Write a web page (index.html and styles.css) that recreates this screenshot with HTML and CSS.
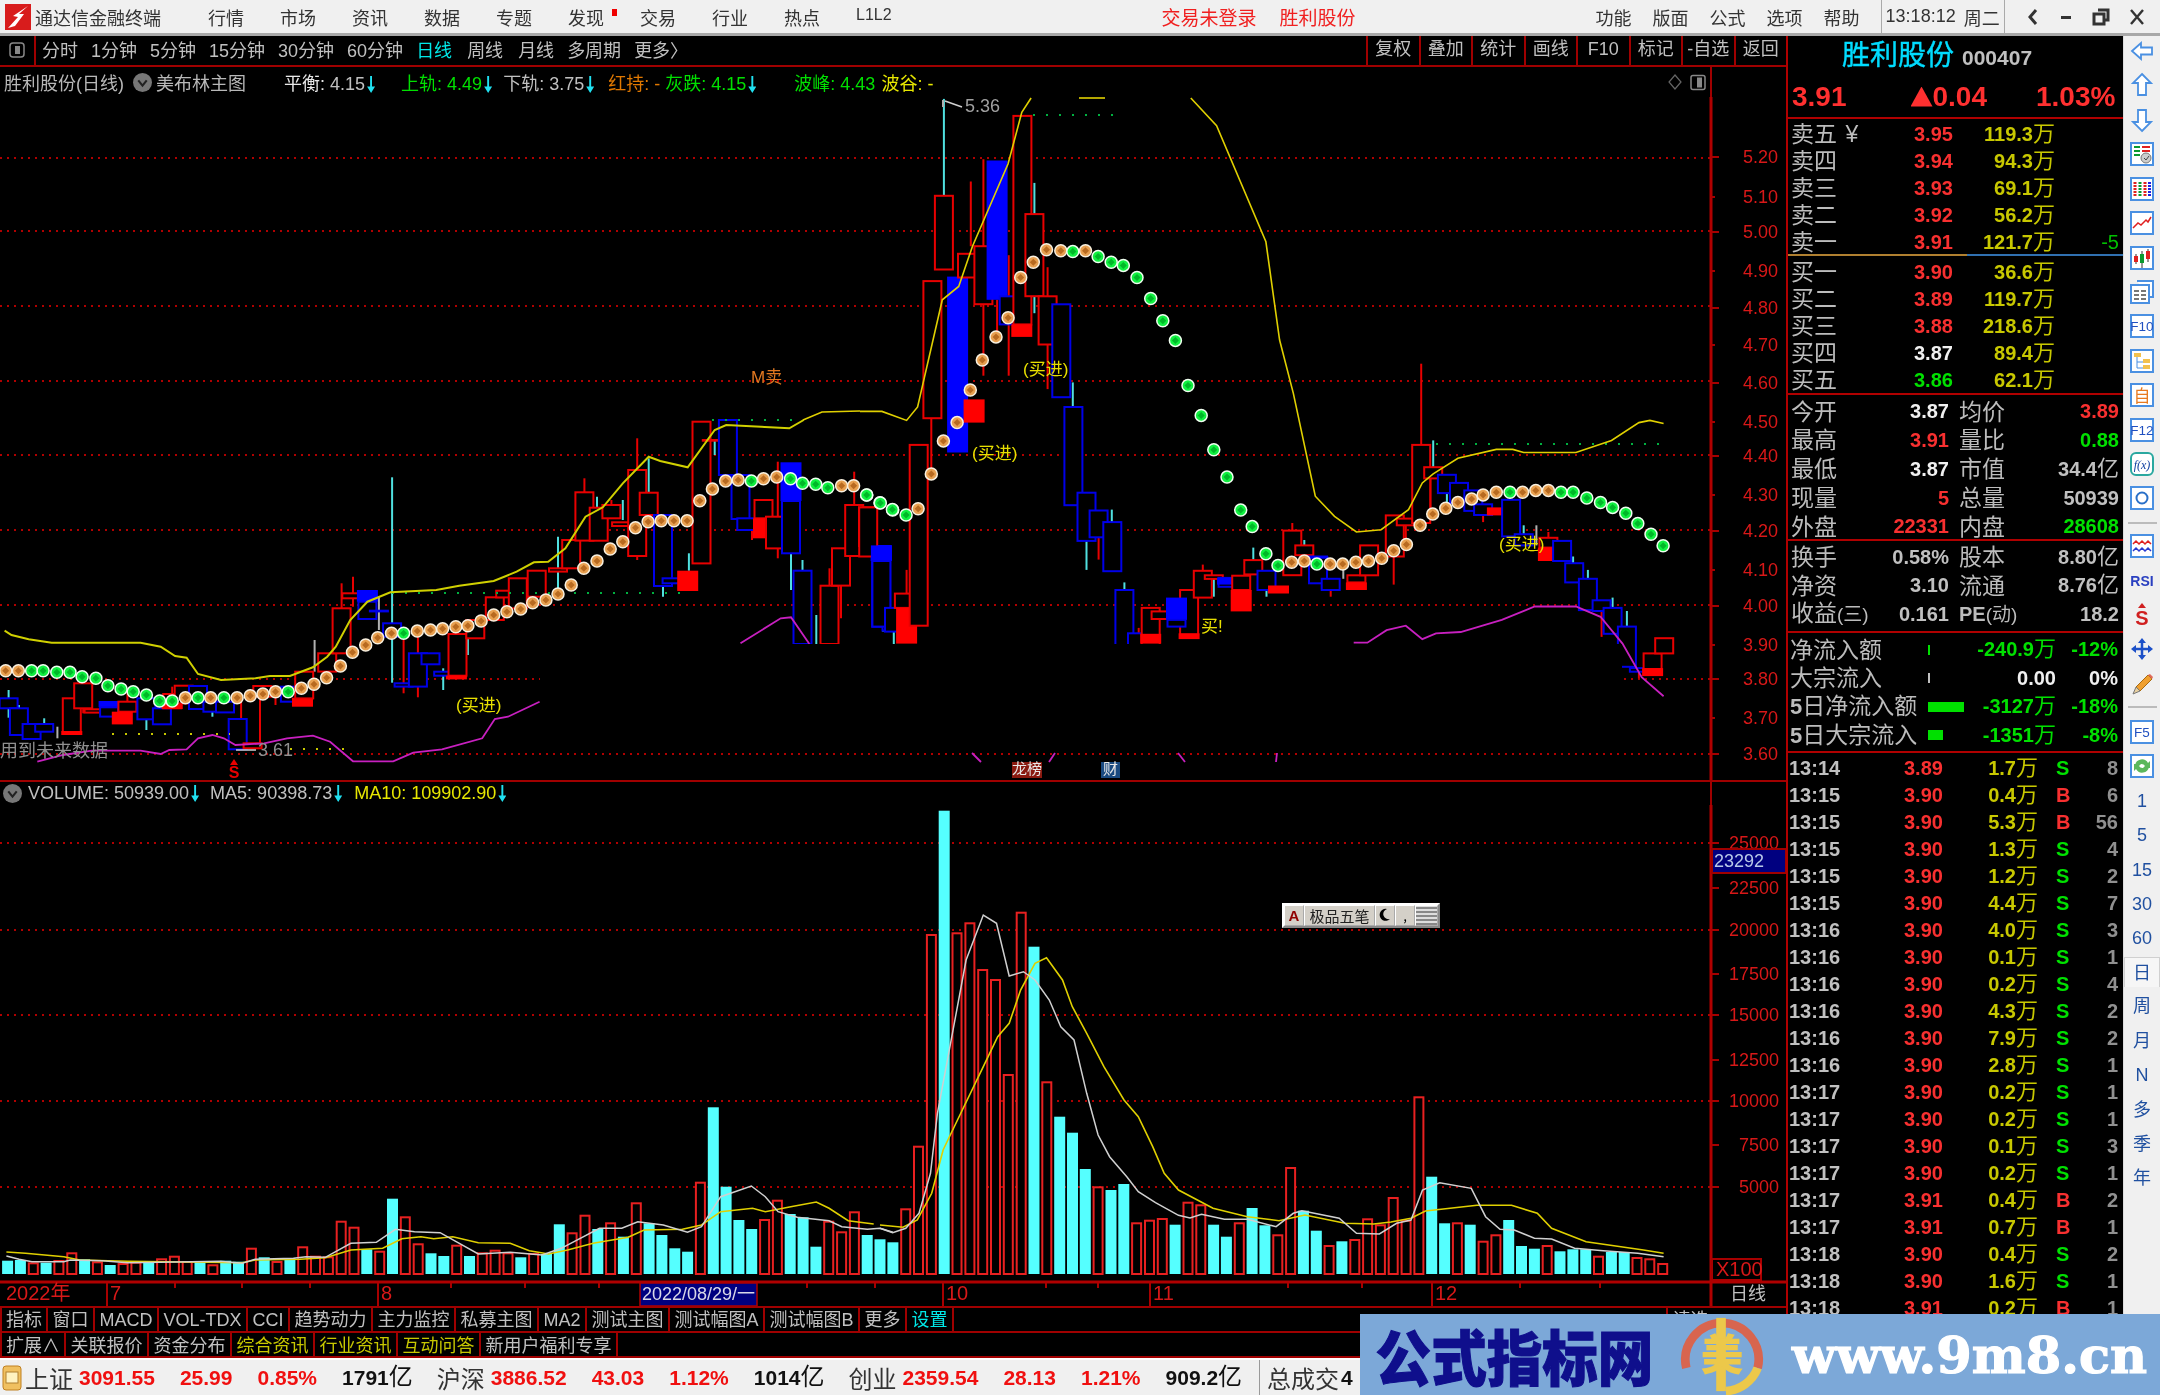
FILE: index.html
```html
<!DOCTYPE html>
<html lang="zh-CN">
<head>
<meta charset="utf-8">
<title>通达信金融终端</title>
<link rel="stylesheet" href="styles.css">
</head>
<body>
<div class="app">
  <header class="titlebar">
    <svg class="logo" viewBox="0 0 26 26"><rect width="26" height="26" fill="#d81c1c"/><path d="M23 2 L8 12 L13 13 L3 24 L10 22 L19 10 L14 10 Z" fill="#fff"/></svg>
    <span class="apptitle">通达信金融终端</span>
    <nav class="menu">
      <span>行情</span><span>市场</span><span>资讯</span><span>数据</span><span>专题</span><span class="dotted">发现</span><span>交易</span><span>行业</span><span>热点</span><span class="lvl">L1L2</span>
    </nav>
    <div class="notice"><span>交易未登录</span><span>胜利股份</span></div>
    <nav class="menu2"><span>功能</span><span>版面</span><span>公式</span><span>选项</span><span>帮助</span></nav>
    <div class="clock"><span>13:18:12</span><span>周二</span></div>
    <div class="winctl">
      <svg viewBox="0 0 14 20" width="14" height="20"><path d="M10 3 L4 10 L10 17" fill="none" stroke="#333" stroke-width="3"/></svg>
      <svg viewBox="0 0 14 20" width="14" height="20"><rect x="2" y="9" width="10" height="3" fill="#333"/></svg>
      <svg viewBox="0 0 18 20" width="18" height="20"><path d="M6 3h10v10h-3M2 7h10v10H2z" fill="none" stroke="#333" stroke-width="3"/></svg>
      <svg viewBox="0 0 16 20" width="16" height="20"><path d="M2 3 L14 17 M14 3 L2 17" fill="none" stroke="#333" stroke-width="2.4"/></svg>
    </div>
  </header>

  <div class="workspace">
    <div class="left">
      <div class="toolbar">
        <div class="tb-icon"><svg viewBox="0 0 16 16" width="16" height="18"><rect x="1" y="1" width="14" height="14" rx="3" fill="none" stroke="#888" stroke-width="1.5"/><rect x="6" y="4" width="5" height="8" fill="#888"/></svg></div>
        <div class="periods">
          <span>分时</span><span>1分钟</span><span>5分钟</span><span>15分钟</span><span>30分钟</span><span>60分钟</span><span class="cyan">日线</span><span class="w1">周线</span><span class="w1">月线</span><span>多周期</span><span>更多〉</span>
        </div>
        <div class="tb-btns"><span>复权</span><span>叠加</span><span>统计</span><span>画线</span><span>F10</span><span>标记</span><span>-自选</span><span>返回</span></div>
      </div>

      <section class="pane-main">
        <div class="chead">
          <span class="h-name">胜利股份(日线)</span>
          <svg class="chev" viewBox="0 0 18 18"><circle cx="9" cy="9" r="9" fill="#777"/><path d="M5 7 L9 12 L13 7" fill="none" stroke="#222" stroke-width="2"/></svg>
          <span class="h-name h-main">美布林主图</span>
          <span class="h-item m-a"><b class="wh">平衡:</b> 4.15<i class="ar"></i></span>
          <span class="h-item m-b"><b class="gr">上轨:</b> <b class="gr">4.49</b><i class="ar"></i></span>
          <span class="h-item m-c"><b>下轨:</b> 3.75<i class="ar"></i></span>
          <span class="h-item m-g"><b class="or">红持:</b> <b class="or">-</b></span>
          <span class="h-item m-d"><b class="gr">灰跌:</b> <b class="gr">4.15</b><i class="ar"></i></span>
          <span class="h-item m-e"><b class="gr">波峰:</b> <b class="gr">4.43</b></span>
          <span class="h-item m-f"><b class="ye">波谷:</b> <b class="ye">-</b></span>
          <span class="h-tools">
            <svg viewBox="0 0 14 18" width="14" height="18"><path d="M7 2 L13 9 L7 16 L1 9 Z" fill="none" stroke="#666" stroke-width="1.2"/></svg>
            <svg viewBox="0 0 16 16" width="16" height="17"><rect x="1" y="1" width="14" height="14" rx="2" fill="none" stroke="#888" stroke-width="1.5"/><rect x="7" y="3" width="5" height="10" fill="#888"/></svg>
          </span>
        </div>
        <svg id="mainChart" class="plot-main" viewBox="0 97 1786 683"></svg>
      </section>

      <section class="pane-vol">
        <div class="chead vhead">
          <svg class="chev vchev" viewBox="0 0 18 18"><circle cx="9" cy="9" r="9" fill="#777"/><path d="M5 7 L9 12 L13 7" fill="none" stroke="#222" stroke-width="2"/></svg>
          <span class="h-item">VOLUME: 50939.00<i class="ar"></i></span>
          <span class="h-item m-v">MA5: 90398.73<i class="ar"></i></span>
          <span class="h-item m-w"><b class="ye">MA10:</b> <b class="ye">109902.90</b><i class="ar"></i></span>
        </div>
        <svg id="volChart" class="plot-vol" viewBox="0 805 1786 501"></svg>
      </section>

      <div class="tabs">
        <span>指标</span><span>窗口</span><span>MACD</span><span>VOL-TDX</span><span>CCI</span><span>趋势动力</span><span>主力监控</span><span>私募主图</span><span>MA2</span><span>测试主图</span><span>测试幅图A</span><span>测试幅图B</span><span>更多</span><span class="cyan">设置</span>
        <span class="tab-end">请选</span>
      </div>
      <div class="tabs tabs2">
        <span>扩展∧</span><span>关联报价</span><span>资金分布</span><span class="yel">综合资讯</span><span class="yel">行业资讯</span><span class="yel">互动问答</span><span>新用户福利专享</span>
      </div>
    </div>

    <aside class="info">
      <div class="namerow"><span class="stock">胜利股份</span><span class="code">000407</span></div>
      <div class="pricerow"><span>3.91</span><span class="chg"><i class="tri"></i>0.04</span><span class="pct">1.03%</span></div>

      <div class="book asks">
        <div class="q"><span class="l">卖五 <em class="yen">¥</em></span><span class="re">3.95</span><span class="am">119.3<i>万</i></span><span></span></div>
        <div class="q"><span class="l">卖四</span><span class="re">3.94</span><span class="am">94.3<i>万</i></span><span></span></div>
        <div class="q"><span class="l">卖三</span><span class="re">3.93</span><span class="am">69.1<i>万</i></span><span></span></div>
        <div class="q"><span class="l">卖二</span><span class="re">3.92</span><span class="am">56.2<i>万</i></span><span></span></div>
        <div class="q"><span class="l">卖一</span><span class="re">3.91</span><span class="am">121.7<i>万</i></span><span class="dl">-5</span></div>
      </div>
      <div class="split"><span></span><span></span></div>
      <div class="book bids">
        <div class="q"><span class="l">买一</span><span class="re">3.90</span><span class="am">36.6<i>万</i></span><span></span></div>
        <div class="q"><span class="l">买二</span><span class="re">3.89</span><span class="am">119.7<i>万</i></span><span></span></div>
        <div class="q"><span class="l">买三</span><span class="re">3.88</span><span class="am">218.6<i>万</i></span><span></span></div>
        <div class="q"><span class="l">买四</span><span class="wt">3.87</span><span class="am">89.4<i>万</i></span><span></span></div>
        <div class="q"><span class="l">买五</span><span class="gn">3.86</span><span class="am">62.1<i>万</i></span><span></span></div>
      </div>

      <div class="stats st1">
        <div class="s"><span class="l">今开</span><span class="v wt">3.87</span><span class="l">均价</span><span class="v re">3.89</span></div>
        <div class="s"><span class="l">最高</span><span class="v re">3.91</span><span class="l">量比</span><span class="v gn">0.88</span></div>
        <div class="s"><span class="l">最低</span><span class="v wt">3.87</span><span class="l">市值</span><span class="v">34.4<i>亿</i></span></div>
        <div class="s"><span class="l">现量</span><span class="v re">5</span><span class="l">总量</span><span class="v">50939</span></div>
        <div class="s"><span class="l">外盘</span><span class="v re">22331</span><span class="l">内盘</span><span class="v gn">28608</span></div>
      </div>
      <div class="stats st2">
        <div class="s s2"><span class="l">换手</span><span class="v">0.58%</span><span class="l">股本</span><span class="v">8.80<i>亿</i></span></div>
        <div class="s s2"><span class="l">净资</span><span class="v">3.10</span><span class="l">流通</span><span class="v">8.76<i>亿</i></span></div>
        <div class="s s2"><span class="l">收益<small>(三)</small></span><span class="v">0.161</span><span class="l"><strong>PE</strong><small>(动)</small></span><span class="v">18.2</span></div>
      </div>
      <div class="stats st3">
        <div class="f"><span class="l">净流入额</span><span class="bar b-tick"></span><span class="v gn">-240.9<i>万</i></span><span class="v gn">-12%</span></div>
        <div class="f"><span class="l">大宗流入</span><span class="bar b-tick b-gray"></span><span class="v wt">0.00</span><span class="v wt">0%</span></div>
        <div class="f"><span class="l"><b>5</b>日净流入额</span><span class="bar b-big"></span><span class="v gn">-3127<i>万</i></span><span class="v gn">-18%</span></div>
        <div class="f"><span class="l"><b>5</b>日大宗流入</span><span class="bar b-mid"></span><span class="v gn">-1351<i>万</i></span><span class="v gn">-8%</span></div>
      </div>

      <div class="trades">
        <div class="t"><span>13:14</span><span class="re">3.89</span><span class="am">1.7<i>万</i></span><span class="gn">S</span><span>8</span></div>
        <div class="t"><span>13:15</span><span class="re">3.90</span><span class="am">0.4<i>万</i></span><span class="re">B</span><span>6</span></div>
        <div class="t"><span>13:15</span><span class="re">3.90</span><span class="am">5.3<i>万</i></span><span class="re">B</span><span>56</span></div>
        <div class="t"><span>13:15</span><span class="re">3.90</span><span class="am">1.3<i>万</i></span><span class="gn">S</span><span>4</span></div>
        <div class="t"><span>13:15</span><span class="re">3.90</span><span class="am">1.2<i>万</i></span><span class="gn">S</span><span>2</span></div>
        <div class="t"><span>13:15</span><span class="re">3.90</span><span class="am">4.4<i>万</i></span><span class="gn">S</span><span>7</span></div>
        <div class="t"><span>13:16</span><span class="re">3.90</span><span class="am">4.0<i>万</i></span><span class="gn">S</span><span>3</span></div>
        <div class="t"><span>13:16</span><span class="re">3.90</span><span class="am">0.1<i>万</i></span><span class="gn">S</span><span>1</span></div>
        <div class="t"><span>13:16</span><span class="re">3.90</span><span class="am">0.2<i>万</i></span><span class="gn">S</span><span>4</span></div>
        <div class="t"><span>13:16</span><span class="re">3.90</span><span class="am">4.3<i>万</i></span><span class="gn">S</span><span>2</span></div>
        <div class="t"><span>13:16</span><span class="re">3.90</span><span class="am">7.9<i>万</i></span><span class="gn">S</span><span>2</span></div>
        <div class="t"><span>13:16</span><span class="re">3.90</span><span class="am">2.8<i>万</i></span><span class="gn">S</span><span>1</span></div>
        <div class="t"><span>13:17</span><span class="re">3.90</span><span class="am">0.2<i>万</i></span><span class="gn">S</span><span>1</span></div>
        <div class="t"><span>13:17</span><span class="re">3.90</span><span class="am">0.2<i>万</i></span><span class="gn">S</span><span>1</span></div>
        <div class="t"><span>13:17</span><span class="re">3.90</span><span class="am">0.1<i>万</i></span><span class="gn">S</span><span>3</span></div>
        <div class="t"><span>13:17</span><span class="re">3.90</span><span class="am">0.2<i>万</i></span><span class="gn">S</span><span>1</span></div>
        <div class="t"><span>13:17</span><span class="re">3.91</span><span class="am">0.4<i>万</i></span><span class="re">B</span><span>2</span></div>
        <div class="t"><span>13:17</span><span class="re">3.91</span><span class="am">0.7<i>万</i></span><span class="re">B</span><span>1</span></div>
        <div class="t"><span>13:18</span><span class="re">3.90</span><span class="am">0.4<i>万</i></span><span class="gn">S</span><span>2</span></div>
        <div class="t"><span>13:18</span><span class="re">3.90</span><span class="am">1.6<i>万</i></span><span class="gn">S</span><span>1</span></div>
        <div class="t"><span>13:18</span><span class="re">3.91</span><span class="am">0.2<i>万</i></span><span class="re">B</span><span>1</span></div>
      </div>
    </aside>

    <aside class="side">
      <svg class="ic" viewBox="0 0 24 24"><path d="M2 12 L11 4 V8.500 H22 V15.500 H11 V20 Z" fill="#fff" stroke="#4a90e2" stroke-width="1.800"/></svg>
      <svg class="ic" viewBox="0 0 24 24"><path d="M12 1 L21 10 H16 V22 H8 V10 H3 Z" fill="#fff" stroke="#4a90e2" stroke-width="1.800"/></svg>
      <svg class="ic" viewBox="0 0 24 24"><path d="M12 23 L21 14 H16 V2 H8 V14 H3 Z" fill="#fff" stroke="#4a90e2" stroke-width="1.800"/></svg>
      <svg class="ic" viewBox="0 0 24 24"><rect x="1" y="1" width="22" height="22" fill="#fff" stroke="#4a90e2" stroke-width="2"/><path d="M4 5h6M4 9h6M4 13h6" stroke="#0a9a30" stroke-width="2"/><path d="M12 5h8M12 9h8" stroke="#e02020" stroke-width="2"/><circle cx="16" cy="16" r="5" fill="#ccc" stroke="#777"/><path d="M14 16l2 2 3-4" fill="none" stroke="#444"/></svg>
      <svg class="ic" viewBox="0 0 24 24"><rect x="1" y="1" width="22" height="22" fill="#fff" stroke="#4a90e2" stroke-width="2"/><path d="M5 5v14" stroke="#e02020" stroke-width="3" stroke-dasharray="2 1"/><path d="M10 5v14" stroke="#0a9a30" stroke-width="3" stroke-dasharray="2 1"/><path d="M15 5v14" stroke="#e02020" stroke-width="3" stroke-dasharray="2 1"/><path d="M19.500 5v14" stroke="#2020e0" stroke-width="3" stroke-dasharray="2 1"/></svg>
      <svg class="ic" viewBox="0 0 24 24"><rect x="1" y="1" width="22" height="22" fill="#fff" stroke="#4a90e2" stroke-width="2"/><path d="M3 17 L8 12 L11 14 L16 9 L18 11 L21 6" fill="none" stroke="#e02020" stroke-width="1.500"/></svg>
      <svg class="ic" viewBox="0 0 24 24"><rect x="1" y="1" width="22" height="22" fill="#fff" stroke="#4a90e2" stroke-width="2"/><path d="M6 8v10M12 5v17M18 3v13" stroke="#333" stroke-width="1"/><rect x="4" y="10" width="4" height="6" fill="#e02020"/><rect x="10" y="8" width="4" height="9" fill="#0a9a30"/><rect x="16" y="5" width="4" height="8" fill="#e02020"/></svg>
      <svg class="ic" viewBox="0 0 24 24"><path d="M7 1h16v16h-4" fill="#fff" stroke="#4a90e2" stroke-width="2"/><rect x="1" y="5" width="18" height="18" fill="#fff" stroke="#4a90e2" stroke-width="2"/><path d="M4 11h5M11 11h5M4 15h5M11 15h5M4 19h5M11 19h5" stroke="#777" stroke-width="2"/></svg>
      <svg class="ic" viewBox="0 0 24 24"><rect x="1" y="1" width="22" height="22" fill="#fff" stroke="#4a90e2" stroke-width="2"/><text class="ic-t" x="12" y="17">F10</text></svg>
      <svg class="ic" viewBox="0 0 24 24"><rect x="1" y="1" width="22" height="22" fill="#fff" stroke="#4a90e2" stroke-width="2"/><path d="M7 8v11h6M7 13h6" fill="none" stroke="#4a90e2"/><rect x="4" y="4" width="7" height="4" fill="#f2c14e"/><rect x="13" y="10" width="7" height="4" fill="#f2c14e"/><rect x="13" y="16" width="7" height="4" fill="#f2c14e"/></svg>
      <svg class="ic" viewBox="0 0 24 24"><rect x="1" y="1" width="22" height="22" fill="#fff" stroke="#4a90e2" stroke-width="2"/><text class="ic-o" x="12" y="18.500">自</text></svg>
      <svg class="ic" viewBox="0 0 24 24"><rect x="1" y="1" width="22" height="22" fill="#fff" stroke="#4a90e2" stroke-width="2"/><text class="ic-t" x="12" y="17">F12</text></svg>
      <svg class="ic" viewBox="0 0 24 24"><rect x="1" y="1" width="22" height="22" rx="5" fill="#fff" stroke="#2aa8a0" stroke-width="2"/><text class="ic-f" x="12" y="17">f(x)</text></svg>
      <svg class="ic" viewBox="0 0 24 24"><rect x="1" y="1" width="22" height="22" fill="#fff" stroke="#4a90e2" stroke-width="2"/><circle cx="12" cy="12" r="5.500" fill="none" stroke="#2a70c8" stroke-width="2"/></svg>
      <i class="side-sep s-a"></i>
      <svg class="ic ic-b" viewBox="0 0 24 24"><rect x="1" y="1" width="22" height="22" fill="#fff" stroke="#4a90e2" stroke-width="2"/><path d="M3 10l3-3 3 3 3-3 3 3 3-3 3 3" fill="none" stroke="#e02020" stroke-width="1.500"/><path d="M3 17l3-3 3 3 3-3 3 3 3-3 3 3" fill="none" stroke="#2a3ad0" stroke-width="1.500"/></svg>
      <svg class="ic" viewBox="0 0 24 24"><text class="ic-r" x="12" y="18">RSI</text></svg>
      <svg class="ic" viewBox="0 0 24 24"><path d="M12 0l4 5H8z" fill="#d02020"/><text class="ic-s" x="12" y="22">S</text></svg>
      <svg class="ic" viewBox="0 0 24 24"><path d="M12 1l4 5h-8zM12 23l4-5h-8zM1 12l5-4v8zM23 12l-5-4v8z" fill="#1c50c8"/><path d="M12 5v14M5 12h14" stroke="#1c50c8" stroke-width="2.500"/></svg>
      <svg class="ic" viewBox="0 0 24 24"><path d="M6 15 L18 3 L22 7 L10 19 Z" fill="#f0a030" stroke="#a86a10"/><path d="M18 3l4 4 1-2-3-3z" fill="#e06a5a"/><path d="M6 15l4 4-7 3z" fill="#e8d0a0" stroke="#777"/></svg>
      <i class="side-sep s-b"></i>
      <svg class="ic ic-c" viewBox="0 0 24 24"><rect x="1" y="1" width="22" height="22" fill="#fff" stroke="#4a90e2" stroke-width="2"/><text class="ic-t" x="12" y="17">F5</text></svg>
      <svg class="ic" viewBox="0 0 24 24"><rect x="1" y="1" width="22" height="22" fill="#fff" stroke="#4a90e2" stroke-width="2"/><path d="M5 11a7 7 0 0 1 13-2l2-2v7h-7l2-2a4 4 0 0 0-7 0zM19 13a7 7 0 0 1-13 2l-2 2v-7h7l-2 2a4 4 0 0 0 7 0z" fill="#5cb85c"/></svg>
      <span class="per">1</span><span class="per">5</span><span class="per">15</span><span class="per">30</span><span class="per">60</span><span class="per per-on">日</span><span class="per">周</span><span class="per">月</span><span class="per">N</span><span class="per">多</span><span class="per">季</span><span class="per">年</span>
    </aside>
  </div>

  <footer class="status">
    <svg class="st-ic" viewBox="0 0 20 26"><rect x="1" y="1" width="18" height="24" rx="3" fill="#f0c060" stroke="#c08020"/><rect x="4" y="7" width="12" height="11" fill="#fff2c0" stroke="#b08030"/></svg>
    <span class="st-l">上证</span><span class="st-n n1">3091.55</span><span class="st-n">25.99</span><span class="st-n">0.85%</span><span class="st-b">1791<i>亿</i></span>
    <span class="st-l g1">沪深</span><span class="st-n n1">3886.52</span><span class="st-n">43.03</span><span class="st-n">1.12%</span><span class="st-b">1014<i>亿</i></span>
    <span class="st-l g1">创业</span><span class="st-n n1">2359.54</span><span class="st-n">28.13</span><span class="st-n">1.21%</span><span class="st-b">909.2<i>亿</i></span>
    <span class="st-l st-total">总成交</span><span class="st-b g2">4</span>
  </footer>

  <div class="ime">
    <span class="ime-a">A</span><span class="ime-n">极品五笔</span>
    <span class="ime-m"><svg viewBox="0 0 12 14" width="12" height="14"><path d="M8 1 A6 6 0 1 0 11 11 A5 5 0 0 1 8 1 Z" fill="#000"/></svg></span>
    <span class="ime-m">,</span><span class="ime-k"></span>
  </div>

  <aside class="watermark">
    <span class="wm-cn">公式指标网</span>
    <svg class="wm-logo" viewBox="0 0 84 84">
      <path d="M5 56 A38 38 0 1 1 79 56" fill="none" stroke="#d8654f" stroke-width="9"/>
      <path d="M46 80 A38 38 0 0 0 79 56" fill="none" stroke="#ecc84a" stroke-width="9"/>
      <rect x="36" y="4" width="10" height="76" fill="#ecc84a"/>
      <text class="wm-mid" x="42" y="58">美</text>
    </svg>
    <span class="wm-en">www.9m8.cn</span>
  </aside>
</div>
<script src="app.js"></script>
</body>
</html>
```

FILE: styles.css
```css
*{box-sizing:border-box}
html,body{margin:0;padding:0;background:#000}
body{font-family:"Liberation Sans","Noto Sans CJK SC",sans-serif;color:#c0c0c0}
i,em{font-style:normal}
b{font-weight:400}
.app{position:relative;width:2160px;height:1395px;overflow:hidden;display:flex;flex-direction:column;background:#000;filter:blur(.35px)}

/* title bar */
.titlebar{flex:none;height:36px;background:#f0f0f0;border-bottom:3px solid #a8a8a8;display:flex;align-items:center;color:#333;font-size:18px}
.logo{width:26px;height:26px;margin-left:5px;flex:none}
.apptitle{margin-left:4px;width:126px;white-space:nowrap}
.menu{display:flex;gap:36px;margin-left:47px}
.menu span{white-space:nowrap}
.dotted{position:relative}
.dotted::after{content:"";position:absolute;left:44px;top:5px;width:5px;height:7px;background:#f00000}
.menu .lvl{font-size:16px;line-height:22px}
.notice{display:flex;gap:23px;margin-left:270px;color:#f02020;font-size:19px;width:196px}
.menu2{display:flex;gap:21px;margin-left:238px}
.clock{display:flex;gap:8px;align-items:center;margin-left:21px;height:33px;padding:0 4px;border-left:1px solid #aaa;border-right:1px solid #aaa;width:124px;font-size:18px;white-space:nowrap}
.winctl{display:flex;align-items:center;gap:19px;margin-left:21px}

/* frame */
.workspace{flex:none;height:1322px;display:flex}
.left{flex:none;width:1786px;display:flex;flex-direction:column}
.toolbar{flex:none;height:31px;display:flex;align-items:center;border-bottom:2px solid #a00000;font-size:18px}
.tb-icon{flex:none;width:36px;height:29px;border-right:2px solid #a00000;padding:5px 0 0 9px}
.periods{display:flex;gap:13px;margin-left:6px;white-space:nowrap;line-height:26px}
.cyan{color:#00e8e8}
.w1{margin-left:2px}
.tb-btns{margin-left:auto;display:grid;grid-template-columns:repeat(8,52.500px);height:29px;line-height:27px;text-align:center}
.tb-btns span{border-left:2px solid #a00000;white-space:nowrap}

.chead{height:30px;width:1712px;border-right:2px solid #a00000;display:flex;align-items:center;font-size:18px;white-space:nowrap;color:#c0c0c0;padding-left:4px}
.h-name{color:#b8b8b8}
.chev{width:19px;height:19px;margin-left:9px;margin-right:4px;flex:none}
.h-main{margin-right:38px}
.h-item b{color:inherit}
.h-item .wh{color:#e8e8e8}
.h-item .gr{color:#00e000}
.h-item .or{color:#e07800}
.h-item .ye{color:#e8e800}
.m-a{margin-left:0}
.m-b{margin-left:26px}
.m-c{margin-left:11px}
.m-g{margin-left:14px}
.m-d{margin-left:5px}
.m-e{margin-left:38px}
.m-f{margin-left:6px}
.m-v{margin-left:11px}
.m-w{margin-left:12px}
.h-tools{margin-left:auto;display:flex;gap:8px;align-items:center;padding-right:4px}
.ar{display:inline-block;width:8px;height:17px;margin-left:2px;vertical-align:-3px;background:#20e0f0;clip-path:polygon(38% 0,62% 0,62% 62%,100% 62%,50% 100%,0 62%,38% 62%)}

.pane-main{flex:none;height:715px;border-bottom:2px solid #a00000;display:flex;flex-direction:column}
.plot-main{display:block;width:1786px;height:683px;overflow:visible}
.pane-vol{flex:none;height:524px;display:flex;flex-direction:column}
.vhead{height:23px;padding-left:3px}
.vchev{margin-left:0;margin-right:6px}
.plot-vol{display:block;width:1786px;height:501px;overflow:visible}

.tabs{flex:none;height:25px;border-top:2px solid #a00000;display:flex;align-items:center;font-size:18px;white-space:nowrap}
.tabs2{height:27px;border-bottom:2px solid #a00000}
.tabs span{height:100%;line-height:24px;padding:0 4.500px;border-right:2px solid #a00000}
.tabs span:first-child{padding:0 4px;border-left:2px solid #a00000}
.tabs2 span{line-height:26px}
.yel{color:#c8c800}
.tabs .tab-end{margin-left:auto;width:44px;border-left:2px solid #a00000;border-right:0;margin-right:76px}

/* info panel */
.info{flex:none;width:337px;border-left:2px solid #b00000;font-size:20px;font-weight:700;color:#c0c0c0;overflow:hidden;background:#000}
.info i{font-size:22px;font-weight:400;line-height:0}
.namerow{height:40px;display:flex;align-items:center;padding-left:54px}
.stock{font-size:28px;font-weight:400;color:#00dcff;line-height:38px;-webkit-text-stroke:.4px #00dcff}
.code{font-size:21px;margin-left:8px;margin-top:3px}
.pricerow{height:43px;border-bottom:2px solid #b00000;display:flex;align-items:center;padding-left:4px;color:#ff3030;font-size:28px}
.chg{margin-left:64px;display:flex;align-items:center}
.tri{width:22px;height:20px;background:#ff3030;clip-path:polygon(50% 0,100% 100%,0 100%)}
.pct{margin-left:49px}
.book{display:flex;flex-direction:column}
.q{height:27px;display:grid;grid-template-columns:123px 50px 91px 1fr;align-items:center;padding:3px 0 0 3px;color:#c8c800}
.l{color:#bcbcbc;font-size:23px;font-weight:400;white-space:nowrap;line-height:24px}
.l small{font-size:19px}
.l strong{font-size:20px;font-weight:700}
.yen{margin-left:2px}
.re{color:#f83030}
.wt{color:#f0f0f0}
.gn{color:#00e000}
.am{text-align:right;color:#c8c800;white-space:nowrap}
.dl{text-align:right;padding-right:4px;color:#00c000;font-weight:400}
.split{height:2px;display:flex}
.split span:first-child{width:179px;background:#b08030}
.split span:last-child{flex:1;background:#3070b0}
.bids{padding-top:1px;height:139px;border-bottom:2px solid #b00000}
.stats{border-bottom:2px solid #b00000}
.st1{height:146px;padding-top:1.500px}
.st2{height:92px;padding-top:1px}
.st3{height:120px;padding-top:1px}
.s{height:28.800px;display:grid;grid-template-columns:78px 80px 80px 90px;align-items:center;padding:1.500px 0 0 3px}
.s2{height:28.500px}
.s .l:nth-child(3){margin-left:10px}
.v{text-align:right;white-space:nowrap}
.f{height:28.500px;display:grid;grid-template-columns:138px 45px 83px 62px;align-items:center;padding:3px 0 0 2px}
.f b{font-weight:700;font-size:22px}
.bar{display:block;background:#00e000;height:10px}
.b-tick{width:2px}
.b-gray{background:#c0c0c0}
.b-big{width:36px}
.b-mid{width:15px}
.trades{display:flex;flex-direction:column}
.t{flex:none;height:27px;display:grid;grid-template-columns:115px 50px 84px 40px 40px;align-items:center;padding:3px 0 0 1px}
.t span:nth-child(4){padding-left:18px}
.t span:nth-child(5){text-align:right;color:#909090}
.t span:first-child{white-space:nowrap}

/* side toolbar */
.side{flex:none;width:37px;background:#f0f0f0;border-left:1px solid #ddd;display:flex;flex-direction:column;align-items:center;gap:4.430px}
.ic{flex:none;width:24px;height:30px}
.ic-b{margin-top:2.600px}
.ic-c{margin-top:4.500px}
.ic-t{font-size:13.500px;fill:#2050c0;text-anchor:middle;font-family:"Liberation Sans",sans-serif}
.ic-o{font-size:17px;fill:#e87a20;text-anchor:middle;font-family:"Noto Sans CJK SC",sans-serif}
.ic-f{font-size:12px;font-style:italic;fill:#1040a0;text-anchor:middle;font-family:"Liberation Serif",serif}
.ic-r{font-size:14px;font-weight:700;fill:#2a40c0;text-anchor:middle;font-family:"Liberation Sans",sans-serif}
.ic-s{font-size:20px;font-weight:700;fill:#d02020;text-anchor:middle;font-family:"Liberation Sans",sans-serif}
.side-sep{flex:none;width:29px;height:2px;background:#bbb}
.s-a{margin-top:4px}
.s-b{margin-top:3px}
.per{flex:none;height:30px;line-height:30px;font-size:18px;color:#2050a0;text-align:center;width:100%}
.per-on{background:#f6f6f6;border:1px solid #d0d0d0;border-bottom:0;margin-top:-1px}

/* status */
.status{flex:none;height:37px;background:#f0f0f0;border-top:2px solid #fff;display:flex;align-items:center;color:#222;font-size:21px;white-space:nowrap;padding-left:2px}
.st-ic{width:20px;height:26px;flex:none}
.st-l{font-size:24px;color:#333;margin-left:3px;width:50px}
.st-n{color:#f01010;font-weight:700;margin-left:25px}
.st-n.n1{margin-left:4px}
.st-b{color:#111;font-weight:700;margin-left:25px}
.st-b i{font-weight:400;font-size:24px;line-height:0}
.st-l.g1{margin-left:24px}
.st-total{margin-left:17px;padding-left:7px;border-left:1px solid #999;width:82px}
.st-b.g2{margin-left:0}

/* floating */
.ime{position:absolute;left:1282px;top:903px;width:158px;height:25px;background:#d4d0c8;border:2px solid #fff;border-right-color:#888;border-bottom-color:#888;display:flex;align-items:center;color:#222;font-size:15px;font-family:"Noto Sans CJK SC",sans-serif}
.ime span{height:21px;line-height:20px;border:1px solid #aaa;border-top-color:#fff;border-left-color:#fff;text-align:center;display:block}
.ime-a{width:20px;color:#900000;font-weight:700;font-family:"Liberation Sans",sans-serif}
.ime-n{width:71px;white-space:nowrap}
.ime-m{width:20px;font-size:13px;color:#000}
.ime-m svg{display:block;margin:2px auto 0}
.ime-k{flex:1;background:repeating-linear-gradient(0deg,#888 0 2px,#ddd 2px 4px)}

.watermark{position:absolute;left:1360px;top:1314px;width:800px;height:81px;background:#7ca8d8;display:flex;align-items:center}
.wm-cn{font-family:"Noto Sans CJK SC",sans-serif;font-weight:900;font-size:55px;color:#0f0f8c;margin-left:17px;width:277px;white-space:nowrap;line-height:60px;-webkit-text-stroke:1px #0f0f8c;transform:scale(1.01,1.1)}
.wm-logo{width:84px;height:81px;margin-left:26px;flex:none}
.wm-mid{font-family:"Noto Sans CJK SC",sans-serif;font-weight:900;font-size:44px;fill:#ecc84a;text-anchor:middle}
.wm-en{font-family:"DejaVu Serif",serif;font-weight:700;font-size:51px;color:#fff;margin-left:28px;white-space:nowrap;-webkit-text-stroke:1.200px #fff}

/* chart strokes */
svg text{font-family:"Liberation Sans","Noto Sans CJK SC",sans-serif}
.grid{stroke:#b00000;stroke-width:2;stroke-dasharray:2 5}
.axis{stroke:#a80000;stroke-width:2;fill:none}
.axis3{stroke:#b00000;stroke-width:3;fill:none}
.ax{fill:#d81818;font-size:18px;text-anchor:end;dominant-baseline:middle}
.d-r{fill:#000;stroke:#e80000;stroke-width:2}
.d-b{fill:#000;stroke:#0000e8;stroke-width:2}
.d-R{fill:#ff0000}
.d-B{fill:#0000ff}
.w-r{stroke:#e80000;stroke-width:2}
.w-c{stroke:#50e0e0;stroke-width:2}
.w-w{stroke:#b0b0b0;stroke-width:2}
.ln-y{fill:none;stroke:#e0d000;stroke-width:1.600}
.ln-yb{fill:none;stroke:#d0d000;stroke-width:2}
.ln-w{fill:none;stroke:#d0d0d0;stroke-width:1.500}
.ln-m{fill:none;stroke:#c820c0;stroke-width:1.800}
.dot-o{fill:#e8a050;stroke:#f8f0e0;stroke-width:1.500}
.dot-g{fill:#10f040;stroke:#f0fff0;stroke-width:1.500}
.dia-o{fill:#b86a20}
.dia-g{fill:#00b828}
.pt-g{fill:none;stroke:#00b040;stroke-width:2;stroke-dasharray:2 11}
.pt-y{fill:none;stroke:#c8c800;stroke-width:2;stroke-dasharray:2 11}
.mask{fill:#000}
.lab-y{fill:#e8e000;font-size:17px;dominant-baseline:middle}
.lab-o{fill:#e07820;font-size:17px;dominant-baseline:middle}
.lab-g{fill:#a0a0a0;font-size:18px;dominant-baseline:middle}
.lab-gd{fill:#909090;font-size:18px;dominant-baseline:middle}
.lab-s{fill:#e80000;font-size:16px;font-weight:700;text-anchor:middle}
.tri-s{fill:#e80000}
.b-long{fill:#8a1a10}
.b-cai{fill:#1a4a80}
.lab-b{fill:#e8e8e8;font-size:15px;dominant-baseline:middle;text-anchor:middle}
.v-r{fill:#000;stroke:#e82020;stroke-width:2}
.v-c{fill:#55ffff}
.date{fill:#d81818;font-size:20px;dominant-baseline:middle}
.datebox{fill:#000080;stroke:#b00000;stroke-width:1.500}
.datetxt{fill:#d8d8e8;font-size:18px;dominant-baseline:middle}
.daytxt{fill:#c0c0c0;font-size:18px;dominant-baseline:middle}
.hl{fill:#000080;stroke:#a00000;stroke-width:2}
.hltxt{fill:#b8c8e8;font-size:18px;dominant-baseline:middle}
```

FILE: app.js
```js
const z7=(x,y)=>[x/1.742,420+y/3];
const z8=(x,y)=>[860+x/1.823,90+y/2.24];
const z9=(x,y)=>[x/1.568,1000+y/3];
const z10=(x,y)=>[880+x/1.742,780+y/3];
const id=(x,y)=>[x,y];
const fx=n=>Math.round(n*10)/10;
const line=(x1,y1,x2,y2,c)=>`<line class="${c}" x1="${fx(x1)}" y1="${fx(y1)}" x2="${fx(x2)}" y2="${fx(y2)}"/>`;
const rect=(x,y,w,h,c)=>`<rect class="${c}" x="${fx(x)}" y="${fx(y)}" width="${fx(w)}" height="${fx(h)}"/>`;
const text=(x,y,t,c)=>`<text class="${c}" x="${x}" y="${y}">${t}</text>`;
const poly=(pts,z,c)=>`<polyline class="${c}" points="${pts.map(p=>z(p[0],p[1]).map(fx).join(',')).join(' ')}"/>`;

/* ---------- price pane ---------- */
const wicks7=[[15,810,893,'c'],[33,855,945,'c'],[77,895,912,'c'],[100,920,955,'w'],[145,865,880,'r'],[222,820,845,'r'],[255,835,930,'c'],[300,800,865,'r'],[370,875,890,'c'],[420,840,897,'r'],[453,800,985,'r'],[480,825,855,'r'],[548,660,755,'w'],[595,490,565,'r'],[615,470,560,'r'],[660,530,630,'w'],[683,172,788,'c'],[703,660,820,'r'],[728,650,832,'r'],[772,745,810,'c'],[815,655,705,'c'],[890,490,545,'r'],[972,350,535,'c'],[1018,175,217,'r'],[1040,230,325,'c'],[1065,240,255,'r'],[1085,240,300,'c'],[1110,55,420,'r'],[1130,115,218,'c'],[1155,490,530,'c'],[1200,400,452,'c'],[1245,60,105,'c'],[1290,295,330,'c'],[1310,300,360,'r'],[1355,125,415,'r'],[1378,400,510,'c'],[1398,420,452,'c'],[1422,585,672,'c'],[1445,445,497,'r'],[1465,497,595,'r'],[1488,155,255,'r'],[1557,632,672,'c']];
const bodies7=[['b',15,835,865],['b',33,865,945],['b',55,912,957],['b',77,912,935],['r',125,835,940],['R',125,933,945],['r',145,790,865],['r',163,868,878],['B',190,843,862],['b',190,862,890],['r',222,845,875],['R',213,875,913],['b',255,835,898],['b',282,865,913],['r',300,822,865],['R',300,845,867],['r',320,797,850],['b',345,798,867],['b',370,845,875],['b',392,845,877],['b',414,897,988],['r',440,970,985],['r',457,798,830],['b',505,800,845],['R',527,833,860],['r',530,755,835],['r',570,700,755],['r',595,565,700],['r',612,520,535],['B',640,510,545],['b',640,545,597],['b',660,572,574],['b',683,610,650],['b',703,790,800],['b',728,700,800],['b',750,700,733],['b',772,755,767],['r',797,642,767],['R',795,767,778],['r',828,600,655],['r',862,532,600],['r',880,512,532],['r',902,475,565],['r',935,452,530],['r',972,445,455],['r',995,360,445],['r',1018,217,362],['r',1043,263,362],['r',1065,255,295],['r',1082,307,318],['r',1110,150,408],['r',1130,218,285],['b',1155,285,498],['b',1170,475,490],['R',1198,452,513],['r',1222,5,430],['r',1240,60,62],['b',1268,0,165],['b',1290,165,297],['b',1300,295,330],['r',1330,240,295],['R',1330,295,355],['r',1350,290,385],['B',1378,127,243],['b',1378,243,400],['b',1398,452,672],['r',1445,497,672],['r',1465,385,497],['r',1488,255,408],['r',1512,262,378],['B',1535,375,423],['b',1535,423,620],['b',1553,565,632]];
const wicks8=[[85,1075,1128,'r'],[42,1202,1213,'c'],[130,735,860,'r'],[153,20,237,'c'],[202,205,350,'r'],[225,155,640,'r'],[250,470,550,'r'],[271,370,640,'r'],[318,208,500,'c'],[342,397,670,'r'],[388,655,765,'c'],[413,1010,1075,'c'],[435,1002,1052,'r'],[459,940,968,'c'],[482,1103,1120,'c'],[508,1205,1217,'r'],[625,1063,1077,'r'],[645,1095,1135,'c'],[717,1025,1053,'c'],[741,1120,1135,'c'],[788,970,987,'r'],[810,1008,1020,'c'],[858,1120,1135,'r'],[881,1070,1095,'w'],[928,1020,1045,'r'],[973,1045,1108,'r'],[995,975,1015,'r'],[1023,613,795,'r'],[1045,785,845,'c'],[1040,870,940,'r'],[1070,903,925,'c'],[1136,952,968,'r'],[1210,975,995,'c'],[1233,975,1020,'w'],[1255,990,1003,'r'],[1300,1045,1060,'c'],[1327,1075,1095,'c'],[1352,1167,1225,'r'],[1372,1137,1160,'c'],[1398,1167,1202,'c'],[1420,1297,1318,'r']];
const bodies8=[['r',15,935,1045],['B',39,1020,1055],['b',39,1055,1202],['b',62,1160,1213],['r',80,1128,1160],['R',85,1160,1240],['r',107,795,1200],['r',132,428,735],['r',153,237,402],['B',178,418,812],['r',195,367,420],['R',208,693,745],['r',225,350,480],['B',250,158,470],['b',271,462,525],['r',296,58,525],['R',295,525,553],['r',318,278,462],['r',342,462,570],['b',367,480,688],['b',389,710,930],['b',413,902,1010],['b',435,942,1002],['b',460,968,1078],['b',482,1120,1245],['b',505,1217,1245],['r',530,1160,1245],['R',530,1218,1240],['r',548,1168,1185],['r',600,1120,1220],['R',600,1217,1230],['B',577,1137,1187],['b',577,1187,1202],['r',625,1077,1137],['r',645,1087,1095],['b',670,1093,1113],['B',670,1093,1108],['r',695,1088,1120],['R',695,1120,1168],['r',717,1053,1085],['b',741,1077,1120],['R',763,1110,1128],['r',788,987,1087],['r',810,1020,1042],['b',835,1045,1105],['B',835,1045,1050],['b',858,1095,1120],['r',905,1087,1103],['R',905,1103,1120],['r',928,1020,1087],['r',975,953,1045],['r',995,960,975],['r',1023,795,970],['r',1045,845,870],['b',1070,862,903],['b',1092,880,925],['b',1118,897,943],['b',1136,928,952],['R',1162,935,953],['b',1187,918,1000],['b',1210,995,1020],['r',1255,1003,1025],['R',1255,1025,1055],['b',1280,1010,1055],['b',1302,1060,1103],['b',1327,1095,1165],['b',1352,1143,1167],['b',1372,1160,1218],['b',1398,1202,1292],['b',1420,1295,1303],['r',1445,1262,1297],['R',1445,1295,1313],['r',1466,1228,1262]];

const dots7='10,752,o 32,752,o 55,752,g 75,752,g 99,757,g 122,757,g 143,770,g 167,775,g 188,797,g 211,807,g 232,815,g 255,825,g 278,843,g 300,843,g 323,833,o 345,833,g 367,833,o 390,833,g 413,833,o 436,827,o 458,822,o 480,815,o 502,815,g 525,805,o 547,793,o 569,773,o 593,738,o 614,697,o 637,675,o 658,653,o 682,640,o 703,640,g 727,633,o 750,630,o 771,626,o 794,620,o 815,617,o 838,603,o 860,585,o 883,575,o 907,567,o 928,548,o 951,540,o 972,522,o 995,495,o 1017,445,o 1040,423,o 1063,387,o 1085,365,o 1107,323,o 1129,305,o 1152,302,o 1174,302,o 1197,302,o 1219,242,o 1241,207,o 1264,183,o 1286,180,o 1309,183,g 1330,176,o 1353,171,o 1377,176,g 1398,190,g 1421,193,g 1442,203,g 1466,197,o 1487,197,o 1510,225,g 1533,248,g 1555,270,g';
const dots8='12,907,g 37,925,g 59,940,g 84,952,g 106,938,o 130,860,o 152,786,o 177,745,o 201,672,o 223,605,o 248,553,o 270,510,o 293,420,o 316,386,o 340,358,o 366,360,o 388,362,g 411,360,o 434,373,g 458,386,g 480,393,g 505,420,g 530,467,g 552,517,g 575,561,g 598,662,g 622,729,g 645,806,g 669,867,g 694,941,g 715,978,g 740,1039,g 762,1065,g 787,1058,o 810,1055,o 833,1062,g 857,1062,o 880,1062,o 904,1058,o 927,1055,o 951,1049,o 973,1032,o 996,1018,o 1021,975,o 1044,950,o 1068,937,o 1090,924,o 1115,916,o 1136,907,o 1160,901,o 1185,901,g 1208,901,o 1232,897,o 1255,897,o 1278,901,g 1300,901,g 1325,914,g 1350,924,g 1372,935,g 1396,948,g 1418,971,g 1442,995,g 1464,1021,g';

const upper7=[[8,632],[20,645],[50,658],[90,668],[245,668],[280,680],[305,708],[325,713],[345,762],[385,780],[445,775],[470,768],[505,768],[545,742],[570,710],[585,680],[610,600],[640,545],[680,517],[760,510],[800,497],[860,483],[900,455],[930,427],[955,425],[985,385],[1020,290],[1050,262],[1085,190],[1130,110],[1150,123],[1198,142],[1245,30],[1265,15],[1375,25],[1400,0]];
const upper8a=[[0,720],[40,720],[85,740],[105,710],[150,470],[180,440],[205,350],[270,165],[295,50],[312,18]];
const upper8b=[[603,18],[650,80],[740,340],[765,560],[790,680],[830,910],[865,955],[905,990],[950,985],[1000,940],[1025,880],[1045,860],[1090,825],[1160,805],[1190,805],[1210,812],[1305,812],[1370,785],[1420,745],[1440,740],[1465,747]];
const lower7=[[65,1025],[110,1005],[160,992],[245,992],[280,1002],[295,990],[325,988],[345,955],[370,945],[390,955],[410,975],[460,970],[500,955],[545,947],[575,965],[615,1024],[685,1024],[720,998],[770,988],[840,955],[862,897],[885,890],[940,845]];
const lower7b=[[1290,670],[1360,595],[1378,592],[1410,672]];
const lower8=[[900,1238],[925,1238],[960,1210],[995,1200],[1025,1230],[1050,1217],[1095,1214],[1170,1187],[1230,1157],[1305,1157],[1350,1180],[1390,1240],[1425,1315],[1465,1358]];

function candle(z,b){
  const [t,cx,y0,y1]=b;
  const p0=z(cx,y0),p1=z(cx,y1);
  const w=(t==='R'||t==='B')?21:18;
  return rect(p0[0]-w/2,p0[1],w,p1[1]-p0[1],'d-'+t);
}
function wick(z,w){
  const p0=z(w[0],w[1]),p1=z(w[0],w[2]);
  return line(p0[0],p0[1],p1[0],p1[1],'w-'+w[3]);
}
function dots(str,z){
  return str.split(' ').map(s=>{
    const a=s.split(',');const p=z(+a[0],+a[1]);const x=fx(p[0]),y=fx(p[1]);
    return `<circle class="dot-${a[2]}" cx="${x}" cy="${y}" r="6"/><polygon class="dia-${a[2]}" points="${x},${y-3.5} ${x+3.5},${y} ${x},${y+3.5} ${x-3.5},${y}"/>`;
  }).join('');
}

let m='';
[158,231,306,381,455,530,605,679,754].forEach(y=>m+=line(0,y,1710,y,'grid'));
wicks7.forEach(w=>m+=wick(z7,w));
wicks8.forEach(w=>m+=wick(z8,w));
bodies7.forEach(b=>m+=candle(z7,b));
bodies8.forEach(b=>m+=candle(z8,b));
m+=line(112,734,230,734,'pt-y')+line(290,749,345,749,'pt-y');
m+=line(392,593,690,593,'pt-g')+line(1033,115,1115,115,'pt-g')+line(712,420,798,420,'pt-g')+line(1436,444,1664,444,'pt-g');
m+=poly(upper7,z7,'ln-yb')+poly([[803,420],[822,412],[860,411]],id,'ln-y')+poly(upper8a,z8,'ln-y')+poly(upper8b,z8,'ln-y');
m+=line(1079,98,1105,98,'ln-y');
m+=poly(lower7,z7,'ln-m')+poly(lower7b,z7,'ln-m')+poly(lower8,z8,'ln-m');
m+=dots(dots7,z7)+dots(dots8,z8);
m+=rect(540,644,1082,104,'mask');
[[972,753,981,762],[1055,753,1049,762],[1178,753,1185,762],[1277,753,1276,762]].forEach(s=>m+=line(s[0],s[1],s[2],s[3],'ln-m'));

/* right axis */
m+=line(1711,97,1711,780,'axis3');
const ax=[['5.20',157],['5.10',197],['5.00',232],['4.90',271],['4.80',308],['4.70',345],['4.60',383],['4.50',422],['4.40',456],['4.30',495],['4.20',531],['4.10',570],['4.00',606],['3.90',645],['3.80',679],['3.70',718],['3.60',754]];
ax.forEach((a,i)=>{m+=line(1711,a[1],i%2?1715:1719,a[1],'axis');m+=text(1778,a[1]+1,a[0],'ax');});

/* annotations */
m+=line(943,100,943,107,'w-w')+poly([[945,101],[962,107]],id,'ln-w');
m+=text(965,107,'5.36','lab-g');
m+=text(0,752,'用到未来数据','lab-gd');
m+=poly([[236,750],[256,750]],id,'ln-w')+text(258,751,'3.61','lab-gd');
m+=`<polygon class="tri-s" points="234,759 238,765 230,765"/>`+text(234,778,'S','lab-s');
[[456,707],[972,455],[1023,371],[1499,546]].forEach(p=>m+=text(p[0],p[1],'(买进)','lab-y'));
m+=text(1201,628,'买!','lab-y');
m+=text(751,379,'M卖','lab-o');
m+=rect(1012,762,30,16,'b-long')+text(1027,770,'龙榜','lab-b');
m+=rect(1101,762,19,16,'b-cai')+text(1110.5,770,'财','lab-b');
document.getElementById('mainChart').innerHTML=m;

/* ---------- volume pane ---------- */
const v9='c782 c780 r790 c788 r783 r760 c778 r787 c795 r792 r788 c785 r778 r770 r786 c785 r796 c782 c785 r746 c772 r786 c775 r742 r770 r772 r665 r683 c748 r755 c596 r652 r733 c760 c768 r737 c768 r760 r752 r760 c772 r762 c762 c673 r700 r647 c687 r670 c710 r610 c670 c705 c745 c755 r548 c322 c560 c660 c687 r660 r602 c642 c652 c740 r665 r697 r637 c705 c718 c727 r628 r440'.split(' ').map(s=>[s[0],(822-+s.slice(1))/3]);
const v10='r465 c92 r460 r430 r570 r600 r885 r398 c500 r907 c1010 c1058 c1167 r1222 c1230 c1212 r1330 r1322 r1317 c1334 r1268 r1276 c1334 c1370 r1330 c1284 c1336 r1366 r1164 c1292 c1352 r1398 c1384 r1380 r1318 r1336 r1254 r1322 r952 c1190 c1330 r1330 c1334 r1385 r1366 c1320 c1398 c1406 r1398 c1414 c1408 c1408 r1430 c1416 c1416 r1434 r1438 r1452'.split(' ').map(s=>[s[0],(1482-+s.slice(1))/3]);
const vols=v9.concat(v10);
const white9=[[10,768],[30,778],[50,785],[100,785],[110,780],[160,782],[200,788],[300,785],[345,784],[380,790],[400,778],[460,775],[480,770],[510,772],[550,730],[590,727],[620,688],[650,695],[690,698],[750,762],[800,757],[850,765],[880,745],[940,685],[975,685],[1000,665],[1040,675],[1078,697],[1100,680],[1130,590],[1178,558],[1200,590],[1220,635],[1250,652],[1300,662],[1320,680],[1360,688],[1380,685],[1400,697]];
const white10=[[0,1345],[22,1358],[45,1345],[68,1300],[88,1180],[100,1000],[125,770],[150,540],[180,405],[203,430],[225,588],[250,575],[270,600],[295,660],[315,740],[338,780],[360,940],[380,1065],[400,1130],[430,1190],[450,1235],[480,1268],[520,1306],[540,1314],[560,1303],[600,1318],[640,1318],[690,1340],[720,1300],[735,1292],[800,1315],[830,1360],[870,1362],[900,1330],[925,1320],[945,1230],[975,1208],[1030,1225],[1055,1310],[1080,1348],[1105,1350],[1140,1375],[1170,1377],[1210,1405],[1260,1412],[1320,1420],[1365,1430]];
const yel9=[[10,756],[40,760],[100,770],[125,780],[200,784],[380,788],[400,780],[470,778],[510,773],[550,750],[600,745],[630,716],[660,710],[680,716],[710,710],[750,728],[800,730],[830,752],[860,762],[890,750],[930,730],[985,712],[1010,690],[1070,688],[1100,675],[1130,635],[1180,625],[1200,635],[1240,620],[1280,606],[1300,625],[1330,662],[1370,672]];
const yel10=[[0,1335],[40,1342],[65,1320],[90,1240],[110,1110],[135,1020],[180,860],[205,770],[225,730],[245,630],[270,550],[290,533],[318,600],[335,680],[360,760],[390,860],[425,960],[450,1010],[475,1100],[495,1180],[520,1230],[580,1285],[640,1310],[695,1322],[740,1305],[810,1330],[860,1332],[890,1326],[925,1315],[950,1293],[1040,1276],[1100,1276],[1145,1300],[1170,1345],[1230,1385],[1330,1410],[1365,1420]];

let v='';
[843,930,1015,1101,1187].forEach(y=>v+=line(0,y,1710,y,'grid'));
vols.forEach((d,i)=>{
  const cx=7.6+12.83*i,top=1274-d[1];
  v+=d[0]==='c'?rect(cx-5.5,top,11,d[1],'v-c'):rect(cx-4.5,top,9,d[1],'v-r');
});
v+=poly(yel9,z9,'ln-y')+poly(white9,z9,'ln-w');
v+=poly(yel10,z10,'ln-y')+poly(white10,z10,'ln-w');

v+=line(1711,805,1711,1306,'axis3');
[['25000',843],['22500',888],['20000',930],['17500',974],['15000',1015],['12500',1060],['10000',1101],['7500',1145],['5000',1187]].forEach(a=>{
  v+=line(1711,a[1],1719,a[1],'axis');v+=text(1779,a[1]+1,a[0],'ax');
});
v+=rect(1712,849,74,24,'hl')+text(1714,862,'23292','hltxt');
v+=rect(1712,1259,49,21,'axis')+text(1716,1271,'X100','date');

/* date axis */
v+=line(0,1282,1786,1282,'axis3');
[107,378,943,1150,1432].forEach(x=>v+=line(x,1283,x,1306,'axis'));
[175,242,310,451,525,599,807,875,1046,1098,1288,1362,1520,1600].forEach(x=>v+=line(x,1283,x,1288,'axis'));
v+=text(6,1295,'2022年','date');
[[110,'7'],[381,'8'],[946,'10'],[1153,'11'],[1435,'12']].forEach(a=>v+=text(a[0],1295,a[1],'date'));
v+=rect(640,1283,117,23,'datebox')+text(642,1295,'2022/08/29/一','datetxt');
v+=text(1730,1295,'日线','daytxt');
document.getElementById('volChart').innerHTML=v;
```
